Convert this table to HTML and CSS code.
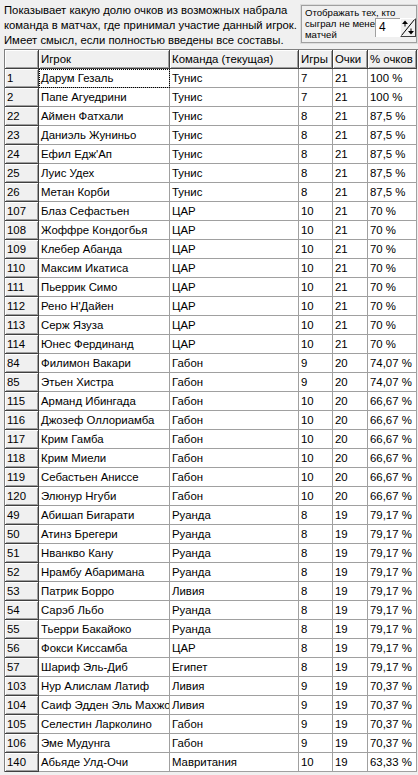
FILE: index.html
```html
<!DOCTYPE html>
<html>
<head>
<meta charset="utf-8">
<link rel="stylesheet" href="styles.css">
</head>
<body>
<div class="top">
  <div class="desc">Показывает какую долю очков из возможных набрала<br>команда в матчах, где принимал участие данный игрок.<br>Имеет смысл, если полностью введены все составы.</div>
  <div class="group">
    <div class="glabel">Отображать тех, кто<br>сыграл не менее<br>матчей</div>
    <div class="spin">
      <div class="sinput">4</div>
      <div class="sbtn">
        <svg width="14" height="17" viewBox="0 0 14 17">
          <line x1="0.5" y1="16.5" x2="13.5" y2="0.5" stroke="#000" stroke-width="1"/>
          <path d="M4 1.5 L1 5 H7 Z" fill="#000"/>
          <rect x="3.5" y="4.5" width="1" height="3" fill="#000"/>
          <path d="M10 15.5 L7 12 H13 Z" fill="#000"/>
          <rect x="9.5" y="9.5" width="1" height="3" fill="#000"/>
        </svg>
      </div>
    </div>
  </div>
</div>
<div class="gridwrap">
<table class="grid">
  <colgroup>
    <col class="c0"><col class="c1"><col class="c2"><col class="c3"><col class="c4"><col class="c5">
  </colgroup>
  <thead>
    <tr><th></th><th>Игрок</th><th>Команда (текущая)</th><th>Игры</th><th>Очки</th><th>% очков</th></tr>
  </thead>
  <tbody>
    <tr><th>1</th><td class="focus">Дарум Гезаль</td><td>Тунис</td><td>7</td><td>21</td><td>100 %</td></tr>
    <tr><th>2</th><td>Папе Агуедрини</td><td>Тунис</td><td>7</td><td>21</td><td>100 %</td></tr>
    <tr><th>22</th><td>Аймен Фатхали</td><td>Тунис</td><td>8</td><td>21</td><td>87,5 %</td></tr>
    <tr><th>23</th><td>Даниэль Жуниньо</td><td>Тунис</td><td>8</td><td>21</td><td>87,5 %</td></tr>
    <tr><th>24</th><td>Ефил Едж'Ап</td><td>Тунис</td><td>8</td><td>21</td><td>87,5 %</td></tr>
    <tr><th>25</th><td>Луис Удех</td><td>Тунис</td><td>8</td><td>21</td><td>87,5 %</td></tr>
    <tr><th>26</th><td>Метан Корби</td><td>Тунис</td><td>8</td><td>21</td><td>87,5 %</td></tr>
    <tr><th>107</th><td>Блаз Сефастьен</td><td>ЦАР</td><td>10</td><td>21</td><td>70 %</td></tr>
    <tr><th>108</th><td>Жоффре Кондогбья</td><td>ЦАР</td><td>10</td><td>21</td><td>70 %</td></tr>
    <tr><th>109</th><td>Клебер Абанда</td><td>ЦАР</td><td>10</td><td>21</td><td>70 %</td></tr>
    <tr><th>110</th><td>Максим Икатиса</td><td>ЦАР</td><td>10</td><td>21</td><td>70 %</td></tr>
    <tr><th>111</th><td>Пьеррик Симо</td><td>ЦАР</td><td>10</td><td>21</td><td>70 %</td></tr>
    <tr><th>112</th><td>Рено Н'Дайен</td><td>ЦАР</td><td>10</td><td>21</td><td>70 %</td></tr>
    <tr><th>113</th><td>Серж Язуза</td><td>ЦАР</td><td>10</td><td>21</td><td>70 %</td></tr>
    <tr><th>114</th><td>Юнес Фердинанд</td><td>ЦАР</td><td>10</td><td>21</td><td>70 %</td></tr>
    <tr><th>84</th><td>Филимон Вакари</td><td>Габон</td><td>9</td><td>20</td><td>74,07 %</td></tr>
    <tr><th>85</th><td>Этьен Хистра</td><td>Габон</td><td>9</td><td>20</td><td>74,07 %</td></tr>
    <tr><th>115</th><td>Арманд Ибингада</td><td>Габон</td><td>10</td><td>20</td><td>66,67 %</td></tr>
    <tr><th>116</th><td>Джозеф Оллориамба</td><td>Габон</td><td>10</td><td>20</td><td>66,67 %</td></tr>
    <tr><th>117</th><td>Крим Гамба</td><td>Габон</td><td>10</td><td>20</td><td>66,67 %</td></tr>
    <tr><th>118</th><td>Крим Миели</td><td>Габон</td><td>10</td><td>20</td><td>66,67 %</td></tr>
    <tr><th>119</th><td>Себастьен Аниссе</td><td>Габон</td><td>10</td><td>20</td><td>66,67 %</td></tr>
    <tr><th>120</th><td>Элюнур Нгуби</td><td>Габон</td><td>10</td><td>20</td><td>66,67 %</td></tr>
    <tr><th>49</th><td>Абишап Бигарати</td><td>Руанда</td><td>8</td><td>19</td><td>79,17 %</td></tr>
    <tr><th>50</th><td>Атинз Брегери</td><td>Руанда</td><td>8</td><td>19</td><td>79,17 %</td></tr>
    <tr><th>51</th><td>Нванкво Кану</td><td>Руанда</td><td>8</td><td>19</td><td>79,17 %</td></tr>
    <tr><th>52</th><td>Нрамбу Абаримана</td><td>Руанда</td><td>8</td><td>19</td><td>79,17 %</td></tr>
    <tr><th>53</th><td>Патрик Борро</td><td>Ливия</td><td>8</td><td>19</td><td>79,17 %</td></tr>
    <tr><th>54</th><td>Сарэб Льбо</td><td>Руанда</td><td>8</td><td>19</td><td>79,17 %</td></tr>
    <tr><th>55</th><td>Тьерри Бакайоко</td><td>Руанда</td><td>8</td><td>19</td><td>79,17 %</td></tr>
    <tr><th>56</th><td>Фокси Киссамба</td><td>ЦАР</td><td>8</td><td>19</td><td>79,17 %</td></tr>
    <tr><th>57</th><td>Шариф Эль-Диб</td><td>Египет</td><td>8</td><td>19</td><td>79,17 %</td></tr>
    <tr><th>103</th><td>Нур Алислам Латиф</td><td>Ливия</td><td>9</td><td>19</td><td>70,37 %</td></tr>
    <tr><th>104</th><td>Саиф Эдден Эль Махжоб</td><td>Ливия</td><td>9</td><td>19</td><td>70,37 %</td></tr>
    <tr><th>105</th><td>Селестин Ларколино</td><td>Габон</td><td>9</td><td>19</td><td>70,37 %</td></tr>
    <tr><th>106</th><td>Эме Мудунга</td><td>Габон</td><td>9</td><td>19</td><td>70,37 %</td></tr>
    <tr><th>140</th><td>Абьяде Улд-Очи</td><td>Мавритания</td><td>10</td><td>19</td><td>63,33 %</td></tr>
  </tbody>
</table>
</div>
</body>
</html>
```
FILE: styles.css
```css
html, body {
  margin: 0;
  padding: 0;
  background: #f0f0f0;
  overflow: hidden;
}
body {
  width: 418px;
  height: 775px;
  font-family: "Liberation Sans", Arial, sans-serif;
  color: #000;
}
.top {
  display: flex;
  width: 418px;
  height: 49px;
}
.desc {
  flex: 1 1 auto;
  font-size: 11.3px;
  line-height: 15px;
  padding: 3px 0 0 4px;
  white-space: nowrap;
}
.group {
  flex: 0 0 118px;
  box-sizing: border-box;
  width: 118px;
  height: 40px;
  margin-top: 4px;
  border: 1px solid #dcdcdc;
  outline: 1px solid #a0a0a0;
  outline-offset: -2px;
  padding: 2px 0 0 4px;
  position: relative;
}
.glabel {
  font-size: 9.6px;
  line-height: 11px;
  white-space: nowrap;
  color: #000;
}
.spin {
  position: absolute;
  left: 74px;
  top: 13px;
  display: flex;
  height: 19px;
}
.sinput {
  box-sizing: border-box;
  width: 25px;
  height: 19px;
  background: #fff;
  border-top: 1px solid #a0a0a0;
  border-left: 1px solid #a0a0a0;
  font-size: 12px;
  line-height: 17px;
  padding-left: 3px;
}
.sbtn {
  box-sizing: border-box;
  width: 16px;
  height: 19px;
  background: #f0f0f0;
  border-top: 1px solid #fff;
  border-left: 1px solid #fff;
  border-right: 1px solid #404040;
  border-bottom: 1px solid #404040;
  display: flex;
}
.sbtn svg { display: block; }
.gridwrap {
  margin-left: 4px;
  border-top: 1px solid #808080;
  border-left: 1px solid #808080;
  width: 413px;
}
.grid {
  table-layout: fixed;
  border-collapse: separate;
  border-spacing: 0;
  width: 412px;
  font-size: 11.4px;
}
.c0 { width: 34px; }
.c1 { width: 131px; }
.c2 { width: 129px; }
.c3 { width: 34px; }
.c4 { width: 35px; }
.c5 { width: 49px; }
.grid th, .grid td {
  height: 19px;
  padding: 0 0 0 2px;
  text-align: left;
  font-weight: normal;
  white-space: nowrap;
  overflow: hidden;
  text-overflow: clip;
  box-sizing: border-box;
  line-height: 18px;
}
.grid td {
  background: #fff;
  border-right: 1px solid #a0a0a0;
  border-bottom: 1px solid #a0a0a0;
}
.grid th {
  background: #f0f0f0;
  border-right: 1px solid #404040;
  border-bottom: 1px solid #404040;
  box-shadow: inset 1px 1px 0 #fff, inset -1px -1px 0 #a0a0a0;
}
.grid td.focus {
  outline: 1px dotted #000;
  outline-offset: -1px;
}
```
